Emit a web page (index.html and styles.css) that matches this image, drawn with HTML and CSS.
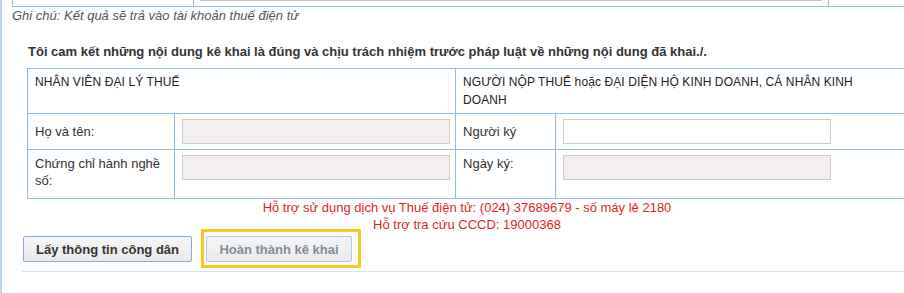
FILE: index.html
```html
<!DOCTYPE html>
<html lang="vi">
<head>
    <meta charset="UTF-8">
    <meta name="viewport" content="width=device-width, initial-scale=1.0">
    <title>Hoàn thành kê khai</title>
    <link rel="stylesheet" href="styles.css">
</head>
<body>

    <div class="page">
        <!-- phần cuối của bảng phía trên -->
        <div class="prev-row">
            <div class="prev-label"></div>
            <div class="prev-field"><div class="prev-input"></div></div>
            <div class="prev-rest"></div>
        </div>

        <p class="note">Ghi chú: Kết quả sẽ trả vào tài khoản thuế điện tử</p>

        <div class="commit">
            <p class="commit-title">Tôi cam kết những nội dung kê khai là đúng và chịu trách nhiệm trước pháp luật về những nội dung đã khai./.</p>

            <table class="sign-table">
                <colgroup>
                    <col class="col-label">
                    <col class="col-field">
                    <col class="col-label2">
                    <col class="col-field2">
                </colgroup>
                <tr class="head-row">
                    <td colspan="2">NHÂN VIÊN ĐẠI LÝ THUẾ</td>
                    <td colspan="2">NGƯỜI NỘP THUẾ hoặc ĐẠI DIỆN HỘ KINH DOANH, CÁ NHÂN KINH DOANH</td>
                </tr>
                <tr class="row-one">
                    <td class="label">Họ và tên:</td>
                    <td class="field"><input type="text" class="input-disabled" disabled></td>
                    <td class="label">Người ký</td>
                    <td class="field"><input type="text" class="input-normal"></td>
                </tr>
                <tr class="row-two">
                    <td class="label">Chứng chỉ hành nghề số:</td>
                    <td class="field"><input type="text" class="input-disabled" disabled></td>
                    <td class="label">Ngày ký:</td>
                    <td class="field"><input type="text" class="input-disabled" disabled></td>
                </tr>
            </table>

            <div class="support">
                <p>Hỗ trợ sử dụng dịch vụ Thuế điện tử: (024) 37689679 - số máy lẻ 2180</p>
                <p>Hỗ trợ tra cứu CCCD: 19000368</p>
            </div>
        </div>

        <div class="actions">
            <button type="button" class="btn btn-citizen">Lấy thông tin công dân</button>
            <span class="highlight">
                <button type="button" class="btn btn-finish" disabled>Hoàn thành kê khai</button>
            </span>
        </div>

        <div class="divider"></div>
    </div>

</body>
</html>
```

FILE: styles.css
```css
body {
    margin: 0;
    padding: 0;
    font-family: "Liberation Sans", Arial, sans-serif;
    color: #333;
    background-color: #fff;
    overflow: hidden;
    width: 904px;
    height: 293px;
}

.page {
    border-left: 2px solid #bcd6ef;
    padding-left: 10px;
    height: 293px;
    width: 1000px;
}

/* bảng phía trên (chỉ thấy phần đáy) */
.prev-row {
    display: flex;
    height: 6px;
    border-left: 1px solid #8ebde6;
    border-bottom: 1px solid #8ebde6;
}

.prev-label {
    width: 180px;
    border-right: 1px solid #8ebde6;
}

.prev-field {
    width: 622px;
    padding: 0 6px;
    border-right: 1px solid #8ebde6;
}

.prev-input {
    height: 1px;
    background-color: #c4c4c4;
}

.note {
    margin: 0;
    font-size: 13px;
    line-height: 18px;
    font-style: italic;
    color: #555;
}

.commit {
    margin-left: 15px;
}

.commit-title {
    margin: 18px 0 7px;
    padding-left: 1px;
    font-size: 13px;
    line-height: 18px;
    font-weight: bold;
    color: #333;
}

.sign-table {
    border-collapse: collapse;
    table-layout: fixed;
    width: 880px;
    font-size: 12px;
    color: #333;
}

.col-label { width: 147px; }
.col-field { width: 281px; }
.col-label2 { width: 100px; }

.sign-table td {
    border: 1px solid #8ebde6;
    padding: 5px 7px;
    vertical-align: top;
}

.head-row td {
    padding: 4px 40px 4px 7px;
    line-height: 18px;
    height: 36px;
    color: #222;
    letter-spacing: 0.1px;
}

.label {
    font-size: 13px;
    line-height: 17px;
}

.row-one .label {
    padding-top: 9px;
}

.row-two td.field {
    padding-bottom: 18px;
}

.field input {
    display: block;
    width: 268px;
    height: 25px;
    box-sizing: border-box;
    margin: 0;
    border: 1px solid #ccc;
    font-family: inherit;
}

.input-disabled {
    background-color: #f2efee;
}

.input-normal {
    background-color: #fff;
}

.support {
    width: 880px;
    text-align: center;
    color: #e31e24;
    font-size: 13px;
    line-height: 17px;
}

.support p {
    margin: 0;
}

.actions {
    display: flex;
    gap: 14px;
    margin: 3px 0 0 11px;
}

.btn {
    height: 26px;
    padding: 0;
    font-family: "Liberation Sans", Arial, sans-serif;
    font-size: 13px;
    font-weight: bold;
    color: #333;
    background: linear-gradient(#f7f6f6, #ebe9e9);
    border: 1px solid #86acd6;
    border-radius: 2px;
}

.btn-citizen {
    width: 169px;
}

.btn-finish {
    width: 146px;
    color: #7f8e9c;
    background: linear-gradient(#f6f5f5, #eceaea);
    border-color: #b3cae3;
}

.highlight {
    position: relative;
    display: block;
}

.highlight::after {
    content: "";
    position: absolute;
    top: -7px;
    right: -9px;
    bottom: -6px;
    left: -5px;
    border: 3px solid #f7c82a;
}

.divider {
    margin: 9px 0 0 10px;
    height: 1px;
    background-color: #d3e5f5;
}
```
